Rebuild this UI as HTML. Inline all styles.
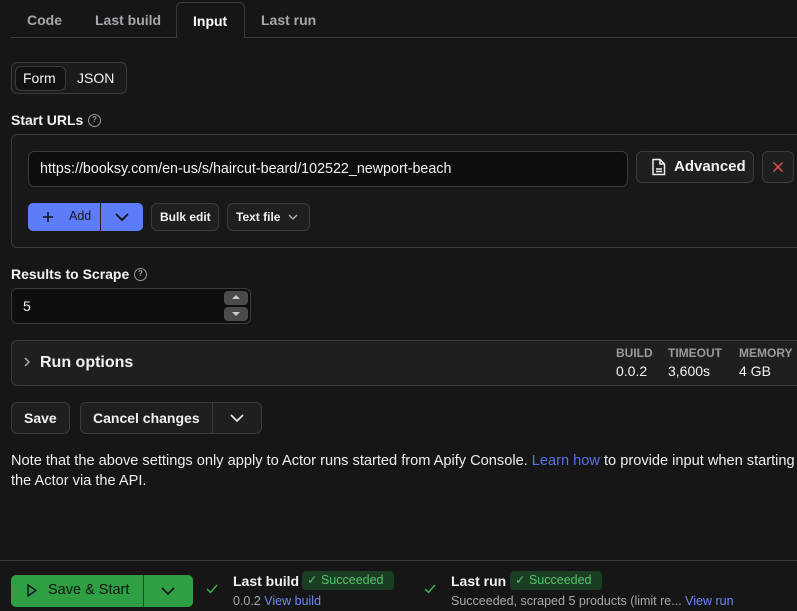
<!DOCTYPE html>
<html><head><meta charset="utf-8"><style>
*{box-sizing:border-box;margin:0;padding:0}
body{width:797px;height:611px;overflow:hidden;background:#161616;color:#f2f2f2;font-family:"Liberation Sans",sans-serif;position:relative}
.a{position:absolute}
.b{position:absolute;border:1px solid #3a3b3e;border-radius:6px;background:#1e1f21}
.t{font-size:14px;font-weight:bold;white-space:nowrap}
.g{color:#a6a8ad}
svg{position:absolute}
</style></head><body>
<div class="a" style="left:11px;top:37px;width:786px;height:1px;background:#3a3b3e"></div>
<div class="a" style="left:176px;top:2px;width:69px;height:36px;border:1px solid #3a3b3e;border-bottom:none;border-radius:6px 6px 0 0;background:#161616"></div>
<div class="a t g" style="left:27px;top:12px">Code</div>
<div class="a t g" style="left:95px;top:12px">Last build</div>
<div class="a t" style="left:193px;top:13px;color:#fff">Input</div>
<div class="a t g" style="left:261px;top:12px">Last run</div>
<div class="b" style="left:11px;top:62px;width:116px;height:32px;background:#1b1b1c"></div>
<div class="b" style="left:15px;top:66px;width:51px;height:25px;background:#111"></div>
<div class="a" style="left:23px;top:70px;font-size:14px">Form</div>
<div class="a" style="left:77px;top:70px;font-size:14px">JSON</div>
<div class="a t" style="left:11px;top:112px">Start URLs</div>
<div class="a" style="left:88px;top:114px;width:13px;height:13px;border:1.3px solid #999;border-radius:50%;font-size:8px;color:#999;text-align:center;line-height:10px;font-weight:bold">?</div>
<div class="b" style="left:11px;top:134px;width:800px;height:114px;background:#181818"></div>
<div class="b" style="left:28px;top:151px;width:600px;height:36px;background:#0e0e0e"></div>
<div class="a" style="left:40px;top:161px;font-size:14.3px">https://booksy.com/en-us/s/haircut-beard/102522_newport-beach</div>
<div class="b" style="left:636px;top:151px;width:118px;height:32px"></div>
<svg style="left:651px;top:158px" width="16" height="18" viewBox="0 0 16 18" fill="none" stroke="#eee" stroke-width="1.5"><path d="M2 1.5h7l4.5 4.5v10.5H2z M9 1.5v4.5h4.5 M5 11h6 M5 13.5h6"/></svg>
<div class="a t" style="left:674px;top:158px;font-size:15px">Advanced</div>
<div class="b" style="left:762px;top:151px;width:32px;height:32px"></div>
<svg style="left:773px;top:162px" width="10" height="10" stroke="#e5534b" stroke-width="1.4"><path d="M0.5 0.5l9 9M9.5 0.5l-9 9"/></svg>
<div class="a" style="left:28px;top:203px;width:115px;height:28px;background:#5c7cfa;border-radius:5px"></div>
<div class="a" style="left:100px;top:203px;width:1px;height:28px;background:#222"></div>
<svg style="left:43px;top:212px" width="10" height="10" stroke="#111" stroke-width="1.5"><path d="M5 0v10M0 5h10"/></svg>
<div class="a" style="left:69px;top:209px;font-size:12.5px;color:#1a1a1a">Add</div>
<svg style="left:114px;top:212px" width="16" height="10" fill="none" stroke="#111" stroke-width="1.8"><path d="M2 2l6 6 6-6"/></svg>
<div class="b" style="left:151px;top:203px;width:68px;height:28px"></div>
<div class="a t" style="left:160px;top:210px;font-size:12px">Bulk edit</div>
<div class="b" style="left:227px;top:203px;width:83px;height:28px"></div>
<div class="a t" style="left:236px;top:210px;font-size:12px">Text file</div>
<svg style="left:288px;top:214px" width="10" height="6" fill="none" stroke="#bbb" stroke-width="1.3"><path d="M1 1l4 4 4-4"/></svg>
<div class="a t" style="left:11px;top:266px">Results to Scrape</div>
<div class="a" style="left:134px;top:268px;width:13px;height:13px;border:1.3px solid #999;border-radius:50%;font-size:8px;color:#999;text-align:center;line-height:10px;font-weight:bold">?</div>
<div class="b" style="left:11px;top:288px;width:240px;height:36px;background:#0e0e0e"></div>
<div class="a" style="left:23px;top:298px;font-size:14px">5</div>
<div class="a" style="left:224px;top:291px;width:24px;height:14px;background:#4a4b4e;border-radius:4px"></div>
<div class="a" style="left:224px;top:307px;width:24px;height:14px;background:#4a4b4e;border-radius:4px"></div>
<div class="a" style="left:232px;top:295px;border:4px solid transparent;border-bottom:4px solid #ccc;border-top:none"></div>
<div class="a" style="left:232px;top:312px;border:4px solid transparent;border-top:4px solid #ccc;border-bottom:none"></div>
<div class="b" style="left:11px;top:340px;width:800px;height:46px"></div>
<svg style="left:24px;top:357px" width="6" height="10" fill="none" stroke="#bbb" stroke-width="1.3"><path d="M1 1l4 4-4 4"/></svg>
<div class="a t" style="left:40px;top:354px;font-size:16px">Run options</div>
<div class="a t g" style="left:616px;top:346px;font-size:12px;color:#9a9ba0">BUILD</div>
<div class="a t g" style="left:668px;top:346px;font-size:12px;color:#9a9ba0">TIMEOUT</div>
<div class="a t g" style="left:739px;top:346px;font-size:12px;color:#9a9ba0">MEMORY</div>
<div class="a" style="left:616px;top:363px;font-size:14px">0.0.2</div>
<div class="a" style="left:668px;top:363px;font-size:14px">3,600s</div>
<div class="a" style="left:739px;top:363px;font-size:14px">4 GB</div>
<div class="b" style="left:11px;top:402px;width:59px;height:32px"></div>
<div class="a t" style="left:24px;top:410px">Save</div>
<div class="b" style="left:80px;top:402px;width:182px;height:32px"></div>
<div class="a" style="left:212px;top:403px;width:1px;height:30px;background:#3a3b3e"></div>
<div class="a t" style="left:93px;top:410px">Cancel changes</div>
<svg style="left:229px;top:413px" width="16" height="10" fill="none" stroke="#eee" stroke-width="1.6"><path d="M2 2l6 6 6-6"/></svg>
<div class="a" style="left:11px;top:451px;font-size:14.6px;line-height:20px;white-space:nowrap;color:#eee">Note that the above settings only apply to Actor runs started from Apify Console. <span style="color:#5a72e0">Learn how</span> to provide input when starting<br>the Actor via the API.</div>
<div class="a" style="left:0;top:560px;width:797px;height:1px;background:#3a3b3e"></div>
<div class="a" style="left:11px;top:575px;width:182px;height:32px;background:#2ea043;border-radius:5px"></div>
<div class="a" style="left:143px;top:575px;width:1px;height:32px;background:#1b4d24"></div>
<svg style="left:27px;top:584px" width="10" height="13" fill="none" stroke="#112" stroke-width="1.4"><path d="M1 1l8 5.5-8 5.5z"/></svg>
<div class="a" style="left:48px;top:582px;font-size:14.5px;color:#111">Save &amp; Start</div>
<svg style="left:160px;top:586px" width="16" height="10" fill="none" stroke="#111" stroke-width="1.6"><path d="M2 2l6 6 6-6"/></svg>
<svg style="left:206px;top:584px" width="12" height="10" fill="none" stroke="#3fb950" stroke-width="1.4"><path d="M1 5l3.5 3.5L11 1"/></svg>
<div class="a t" style="left:233px;top:573px;font-size:14px">Last build</div>
<div class="a" style="left:302px;top:571px;width:92px;height:19px;background:#1b3d22;border-radius:4px;color:#56c26a;font-size:12.5px;line-height:19px;padding-left:5px;white-space:nowrap">✓ Succeeded</div>
<div class="a g" style="left:233px;top:594px;font-size:12.5px">0.0.2 <span style="color:#6d8af5">View build</span></div>
<svg style="left:424px;top:584px" width="12" height="10" fill="none" stroke="#3fb950" stroke-width="1.4"><path d="M1 5l3.5 3.5L11 1"/></svg>
<div class="a t" style="left:451px;top:573px;font-size:14px">Last run</div>
<div class="a" style="left:510px;top:571px;width:92px;height:19px;background:#1b3d22;border-radius:4px;color:#56c26a;font-size:12.5px;line-height:19px;padding-left:5px;white-space:nowrap">✓ Succeeded</div>
<div class="a g" style="left:451px;top:594px;font-size:12.5px;white-space:nowrap">Succeeded, scraped 5 products (limit re... <span style="color:#6d8af5">View run</span></div>
</body></html>
